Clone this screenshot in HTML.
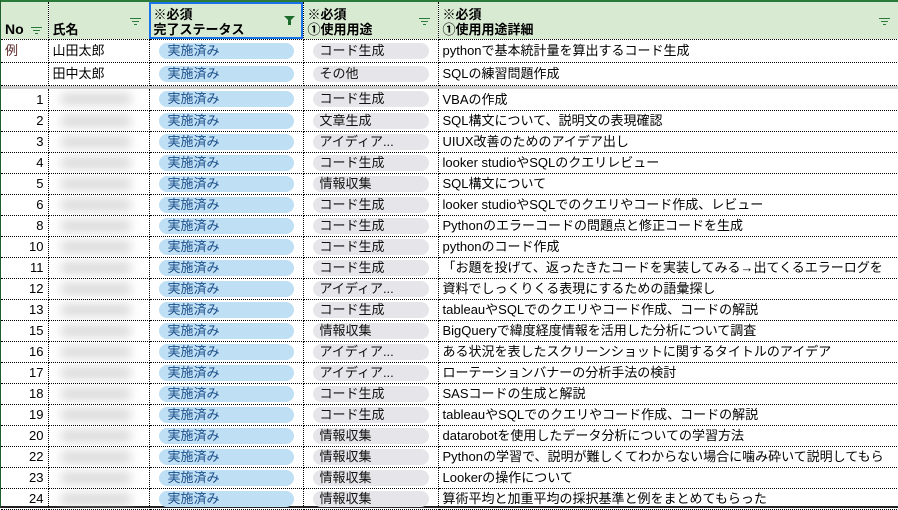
<!DOCTYPE html><html><head><meta charset="utf-8"><style>
*{margin:0;padding:0;box-sizing:border-box}
body{width:898px;height:508px;overflow:hidden;background:#fff;font-family:"Liberation Sans","Noto Sans CJK JP",sans-serif;font-size:13px;color:#000;position:relative}
.wrap{position:absolute;left:0;top:0;width:898px;height:508px;border-left:1px solid #1e5e2e;border-bottom:2px solid #222;border-top:2px solid #2a7a3a}
table{border-collapse:collapse;table-layout:fixed;width:898px}
td{border-right:1px dotted #000;border-bottom:1px dotted #000;height:21px;padding:0 4px;white-space:nowrap;overflow:hidden;vertical-align:middle;line-height:19px}
tr.h td{background:#d9ead3;height:37px;font-weight:bold;line-height:15px;vertical-align:bottom;padding-bottom:2px;position:relative}
tr.e td{height:23px}
tr.sep td{height:4px;background:#ccc;border:none;padding:0}
.n{text-align:right}
.p{display:block;background:#bfdff5;color:#1c4f8a;border-radius:8px;height:16px;line-height:16px;padding-left:9px;margin:0 5px}
.g{display:block;background:#e6e6ea;border-radius:8px;height:16px;line-height:16px;padding-left:7px;margin:0 5px;color:#111}
.f{position:absolute;right:8px;bottom:14px;width:11px;height:7px}
.bl{display:block;height:12px;width:70px;margin-left:8px;background:#bbb;filter:blur(5px);opacity:.55}
.sel{outline:2px solid #1a73e8;outline-offset:-2px}
</style></head><body><div class="wrap">
<table>
<colgroup><col style="width:47px"><col style="width:101px"><col style="width:154px"><col style="width:135px"><col></colgroup>
<tr class="h"><td style="font-size:14px">No<svg class="f" style="right:6px;bottom:5px" viewBox="0 0 11 7"><path d="M0 .5h11M2 3.5h7M4 6.5h3" stroke="#2a7a3a"/></svg></td><td>氏名<svg class="f" viewBox="0 0 11 7"><path d="M0 .5h11M2 3.5h7M4 6.5h3" stroke="#2a7a3a"/></svg></td><td class="sel">※必須<br>完了ステータス<svg class="f" viewBox="0 0 11 9" style="height:9px"><path d="M0 0h11L7 4v5H4V4z" fill="#1e6b2e"/></svg></td><td>※必須<br>①使用用途<svg class="f" viewBox="0 0 11 7"><path d="M0 .5h11M2 3.5h7M4 6.5h3" stroke="#2a7a3a"/></svg></td><td>※必須<br>①使用用途詳細<svg class="f" viewBox="0 0 11 7"><path d="M0 .5h11M2 3.5h7M4 6.5h3" stroke="#2a7a3a"/></svg></td></tr>
<tr class="e"><td style="color:#5a2a2a">例</td><td>山田太郎</td><td><span class="p">実施済み</span></td><td><span class="g">コード生成</span></td><td>pythonで基本統計量を算出するコード生成</td></tr>
<tr class="e"><td></td><td>田中太郎</td><td><span class="p">実施済み</span></td><td><span class="g">その他</span></td><td>SQLの練習問題作成</td></tr>
<tr class="sep"><td></td><td></td><td></td><td></td><td></td></tr>
<tr><td class="n">1</td><td><span class="bl"></span></td><td><span class="p">実施済み</span></td><td><span class="g">コード生成</span></td><td>VBAの作成</td></tr>
<tr><td class="n">2</td><td><span class="bl"></span></td><td><span class="p">実施済み</span></td><td><span class="g">文章生成</span></td><td>SQL構文について、説明文の表現確認</td></tr>
<tr><td class="n">3</td><td><span class="bl"></span></td><td><span class="p">実施済み</span></td><td><span class="g">アイディア...</span></td><td>UIUX改善のためのアイデア出し</td></tr>
<tr><td class="n">4</td><td><span class="bl"></span></td><td><span class="p">実施済み</span></td><td><span class="g">コード生成</span></td><td>looker studioやSQLのクエリレビュー</td></tr>
<tr><td class="n">5</td><td><span class="bl"></span></td><td><span class="p">実施済み</span></td><td><span class="g">情報収集</span></td><td>SQL構文について</td></tr>
<tr><td class="n">6</td><td><span class="bl"></span></td><td><span class="p">実施済み</span></td><td><span class="g">コード生成</span></td><td>looker studioやSQLでのクエリやコード作成、レビュー</td></tr>
<tr><td class="n">8</td><td><span class="bl"></span></td><td><span class="p">実施済み</span></td><td><span class="g">コード生成</span></td><td>Pythonのエラーコードの問題点と修正コードを生成</td></tr>
<tr><td class="n">10</td><td><span class="bl"></span></td><td><span class="p">実施済み</span></td><td><span class="g">コード生成</span></td><td>pythonのコード作成</td></tr>
<tr><td class="n">11</td><td><span class="bl"></span></td><td><span class="p">実施済み</span></td><td><span class="g">コード生成</span></td><td>「お題を投げて、返ったきたコードを実装してみる→出てくるエラーログを</td></tr>
<tr><td class="n">12</td><td><span class="bl"></span></td><td><span class="p">実施済み</span></td><td><span class="g">アイディア...</span></td><td>資料でしっくりくる表現にするための語彙探し</td></tr>
<tr><td class="n">13</td><td><span class="bl"></span></td><td><span class="p">実施済み</span></td><td><span class="g">コード生成</span></td><td>tableauやSQLでのクエリやコード作成、コードの解説</td></tr>
<tr><td class="n">15</td><td><span class="bl"></span></td><td><span class="p">実施済み</span></td><td><span class="g">情報収集</span></td><td>BigQueryで緯度経度情報を活用した分析について調査</td></tr>
<tr><td class="n">16</td><td><span class="bl"></span></td><td><span class="p">実施済み</span></td><td><span class="g">アイディア...</span></td><td>ある状況を表したスクリーンショットに関するタイトルのアイデア</td></tr>
<tr><td class="n">17</td><td><span class="bl"></span></td><td><span class="p">実施済み</span></td><td><span class="g">アイディア...</span></td><td>ローテーションバナーの分析手法の検討</td></tr>
<tr><td class="n">18</td><td><span class="bl"></span></td><td><span class="p">実施済み</span></td><td><span class="g">コード生成</span></td><td>SASコードの生成と解説</td></tr>
<tr><td class="n">19</td><td><span class="bl"></span></td><td><span class="p">実施済み</span></td><td><span class="g">コード生成</span></td><td>tableauやSQLでのクエリやコード作成、コードの解説</td></tr>
<tr><td class="n">20</td><td><span class="bl"></span></td><td><span class="p">実施済み</span></td><td><span class="g">情報収集</span></td><td>datarobotを使用したデータ分析についての学習方法</td></tr>
<tr><td class="n">22</td><td><span class="bl"></span></td><td><span class="p">実施済み</span></td><td><span class="g">情報収集</span></td><td>Pythonの学習で、説明が難しくてわからない場合に噛み砕いて説明してもら</td></tr>
<tr><td class="n">23</td><td><span class="bl"></span></td><td><span class="p">実施済み</span></td><td><span class="g">情報収集</span></td><td>Lookerの操作について</td></tr>
<tr><td class="n">24</td><td><span class="bl"></span></td><td><span class="p">実施済み</span></td><td><span class="g">情報収集</span></td><td>算術平均と加重平均の採択基準と例をまとめてもらった</td></tr>
</table></div></body></html>
